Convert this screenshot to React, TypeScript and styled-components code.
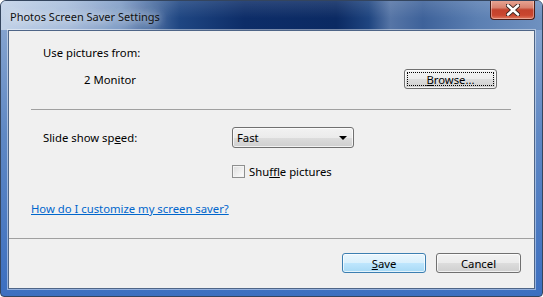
import React from "react";
import styled, { createGlobalStyle } from "styled-components";

const GlobalStyle = createGlobalStyle`
  html, body {
    margin: 0;
    padding: 0;
    background: #ffffff;
  }

  body {
    font-family: "Noto Sans", "Open Sans", sans-serif;
    font-size: 11.3px;
    color: #000000;
  }
`;

const Window = styled.div`
  width: 543px;
  height: 297px;
  box-sizing: border-box;
  border: 1px solid #34455e;
  border-radius: 6px 6px 4px 4px;
  display: flex;
  flex-direction: column;
  overflow: hidden;
  background: linear-gradient(180deg, #8eaad2 0%, #5f88c4 45%, #3c6fc0 100%);
`;

const TitleBar = styled.div`
  height: 29px;
  flex-shrink: 0;
  display: flex;
  align-items: flex-start;
  background:
    linear-gradient(180deg, rgba(255, 255, 255, 0.12) 0%, rgba(255, 255, 255, 0) 60%),
    linear-gradient(
      90deg,
      #c2d2e8 0%,
      #a8bedc 12%,
      #7f9cc6 22%,
      #1f4682 33%,
      #0d2d68 45%,
      #0b2a63 62%,
      #1f4580 68%,
      #5675a6 72%,
      #3e629a 78%,
      #5b7fb2 88%,
      #6f91c0 100%
    );
`;

const Title = styled.span`
  margin: 8px 0 0 9px;
  font-size: 11px;
  line-height: 16px;
  color: #111111;
  text-shadow: 0 0 8px rgba(255, 255, 255, 0.95), 0 0 14px rgba(255, 255, 255, 0.8);
`;

const CloseButton = styled.div`
  margin-left: auto;
  margin-right: 7px;
  margin-top: -1px;
  width: 45px;
  height: 20px;
  box-sizing: border-box;
  border: 1px solid #4b1d16;
  border-top: none;
  border-radius: 0 0 4px 4px;
  display: flex;
  align-items: center;
  justify-content: center;
  background: linear-gradient(180deg, #e9a897 0%, #d9826f 40%, #c3422c 52%, #c9462f 80%, #e07a60 100%);
  box-shadow: inset 0 0 0 1px rgba(255, 255, 255, 0.35);
`;

const Client = styled.div`
  flex: 1;
  margin: 0 7px 7px 7px;
  background: #f0f0f0;
  border: 1px solid #4e6587;
  box-shadow: 0 0 0 1px rgba(255, 255, 255, 0.45);
  display: flex;
  flex-direction: column;
`;

const Main = styled.div`
  padding: 14px 23px 0 22px;
  display: flex;
  flex-direction: column;
`;

const Heading = styled.div`
  height: 16px;
  line-height: 16px;
  padding-left: 12px;
`;

const SourceRow = styled.div`
  margin-top: 8px;
  height: 20px;
  display: flex;
  align-items: center;
  padding: 0 14px 0 53px;
`;

const Separator = styled.div`
  margin-top: 20px;
  height: 1px;
  background: #a0a0a0;
`;

const SpeedRow = styled.div`
  margin-top: 17px;
  height: 21px;
  display: grid;
  grid-template-columns: 189px 122px;
  align-items: center;
  padding-left: 12px;
`;

const CheckRow = styled.label`
  margin-top: 17px;
  height: 13px;
  display: flex;
  align-items: center;
  gap: 4px;
  padding-left: 201px;
`;

const CheckBox = styled.span`
  width: 13px;
  height: 13px;
  box-sizing: border-box;
  border: 1px solid #8e8f8f;
  background: linear-gradient(135deg, #dcdcdc 0%, #f4f4f4 70%, #ffffff 100%);
  box-shadow: inset 0 0 0 1px #f4f4f4;
`;

const Link = styled.a`
  margin-top: 23px;
  height: 16px;
  line-height: 16px;
  color: #0066cc;
  text-decoration: underline;
  align-self: flex-start;
`;

const Footer = styled.div`
  margin-top: 21px;
  flex: 1;
  border-top: 1px solid #a0a0a0;
  display: flex;
  justify-content: flex-end;
  align-items: flex-start;
  gap: 10px;
  padding: 14px 13px 0 0;
`;

const Button = styled.button<{ $width: number; $primary?: boolean; $focused?: boolean }>`
  width: ${(p) => p.$width}px;
  height: 20px;
  box-sizing: border-box;
  margin: 0 0 0 ${(p) => (p.$focused ? "auto" : "0")};
  padding: 0;
  font-family: inherit;
  font-size: 11.3px;
  color: #000000;
  border: 1px solid ${(p) => (p.$primary ? "#3c7fb1" : "#707070")};
  border-radius: 3px;
  position: relative;
  background: ${(p) =>
    p.$primary
      ? "linear-gradient(180deg, #eaf6fd 0%, #d9f0fc 50%, #bee6fd 51%, #a7d9f5 100%)"
      : "linear-gradient(180deg, #f2f2f2 0%, #ebebeb 50%, #dddddd 51%, #cfcfcf 100%)"};
  box-shadow: inset 0 0 0 1px rgba(255, 255, 255, 0.7);

  &::after {
    content: "";
    display: ${(p) => (p.$focused ? "block" : "none")};
    position: absolute;
    inset: 2px;
    border: 1px dotted #000000;
    border-radius: 1px;
  }

  u {
    text-decoration: underline;
  }
`;

const Select = styled.div`
  height: 21px;
  box-sizing: border-box;
  border: 1px solid #707070;
  border-radius: 3px;
  display: flex;
  align-items: center;
  justify-content: space-between;
  padding: 0 6px 0 4px;
  background: linear-gradient(180deg, #f2f2f2 0%, #ebebeb 50%, #dddddd 51%, #cfcfcf 100%);
  box-shadow: inset 0 0 0 1px rgba(255, 255, 255, 0.7);
`;

const Arrow = styled.span`
  width: 0;
  height: 0;
  border-left: 4px solid transparent;
  border-right: 4px solid transparent;
  border-top: 4px solid #000000;
`;

export default function App() {
  return (
    <>
      <GlobalStyle />
      <Window>
        <TitleBar>
          <Title>Photos Screen Saver Settings</Title>
          <CloseButton>
            <svg width="14" height="12" viewBox="0 0 14 12">
              <path d="M2 1.5 L12 10.5 M12 1.5 L2 10.5" stroke="#3a2420" strokeWidth="4.4" strokeLinecap="round" />
              <path d="M2 1.5 L12 10.5 M12 1.5 L2 10.5" stroke="#ffffff" strokeWidth="2.6" strokeLinecap="round" />
            </svg>
          </CloseButton>
        </TitleBar>
        <Client>
          <Main>
            <Heading>Use pictures from:</Heading>
            <SourceRow>
              <span>2 Monitor</span>
              <Button $width={93} $focused>
                <u>B</u>rowse...
              </Button>
            </SourceRow>
            <Separator />
            <SpeedRow>
              <span>
                Slide show sp<u>e</u>ed:
              </span>
              <Select>
                <span>Fast</span>
                <Arrow />
              </Select>
            </SpeedRow>
            <CheckRow>
              <CheckBox />
              <span>
                Shu<u>f</u>fle pictures
              </span>
            </CheckRow>
            <Link href="#">How do I customize my screen saver?</Link>
          </Main>
          <Footer>
            <Button $width={84} $primary>
              <u>S</u>ave
            </Button>
            <Button $width={85}>Cancel</Button>
          </Footer>
        </Client>
      </Window>
    </>
  );
}
